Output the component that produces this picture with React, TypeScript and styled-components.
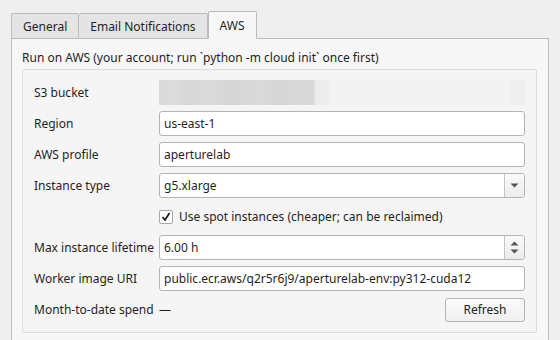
import styled, { createGlobalStyle } from "styled-components";

const Global = createGlobalStyle`
  html, body {
    margin: 0;
    padding: 0;
    background: #efefef;
    font-family: "Noto Sans", "Open Sans", sans-serif;
    font-size: 12px;
    color: #1f1f1f;
  }
`;

const Window = styled.div`
  width: 560px;
  height: 340px;
  box-sizing: border-box;
  padding: 11px 11px 0 11px;
  overflow: hidden;
`;

const TabBar = styled.div`
  display: flex;
  align-items: flex-end;
  height: 27px;
  position: relative;
  z-index: 1;
`;

type TabProps = { active?: boolean };

const Tab = styled.div<TabProps>`
  box-sizing: border-box;
  height: ${(p) => (p.active ? "28px" : "26px")};
  padding: 0 11px;
  display: flex;
  align-items: center;
  border: 1px solid #bcbcbc;
  border-bottom: ${(p) => (p.active ? "1px solid #f7f7f7" : "1px solid #bcbcbc")};
  border-left: ${(p) => (p.active ? "1px solid #bcbcbc" : "none")};
  border-radius: 2px 2px 0 0;
  background: ${(p) => (p.active ? "#f7f7f7" : "#e4e4e4")};
  margin-bottom: -1px;
  &:first-child {
    border-left: 1px solid #bcbcbc;
  }
`;

const Panel = styled.div`
  box-sizing: border-box;
  width: 538px;
  height: 320px;
  border: 1px solid #bcbcbc;
  background: #f7f7f7;
  padding: 9px 10px 0 10px;
`;

const Intro = styled.div`
  height: 21px;
  line-height: 19px;
`;

const Group = styled.div`
  box-sizing: border-box;
  width: 515px;
  height: 264px;
  border: 1px solid #dcdcdc;
  border-radius: 2px;
  background: #f5f5f5;
  padding: 10px 10px 0 10px;
  display: grid;
  grid-template-columns: 126px 366px;
  grid-auto-rows: 25px;
  row-gap: 6px;
  align-items: center;
`;

const Label = styled.div`
  padding-left: 1px;
  white-space: nowrap;
`;

const Blurred = styled.div`
  height: 25px;
  background:
    linear-gradient(90deg,
      #dadada 0px, #dcdcdc 14px, #d7d7d7 28px, #dbdbdb 50px,
      #d6d6d6 70px, #dadada 100px, #d5d5d5 120px, #d9d9d9 140px,
      #d8d8d8 155px, #ececec 156px, #ececec 170px, #f3f3f3 171px,
      #f3f3f3 351px, #eeeeee 352px, #eeeeee 366px);
`;

const Field = styled.div`
  box-sizing: border-box;
  height: 25px;
  border: 1px solid #b4b4b4;
  border-radius: 3px;
  background: #ffffff;
  display: flex;
  align-items: stretch;
  overflow: hidden;
`;

const FieldText = styled.div`
  flex: 1;
  padding-left: 4px;
  display: flex;
  align-items: center;
  white-space: nowrap;
`;

const SideButton = styled.div`
  width: 19px;
  border-left: 1px solid #c4c4c4;
  background: linear-gradient(#fafafa, #ececec);
  display: flex;
  flex-direction: column;
  align-items: center;
  justify-content: center;
  gap: 3px;
`;

const Arrow = styled.svg`
  display: block;
`;

const CheckRow = styled.div`
  grid-column: 2;
  display: flex;
  align-items: center;
  gap: 6px;
`;

const CheckBox = styled.div`
  box-sizing: border-box;
  width: 14px;
  height: 14px;
  border: 1px solid #a8a8a8;
  border-radius: 2px;
  background: #fff;
  display: flex;
  align-items: center;
  justify-content: center;
`;

const SpendRow = styled.div`
  display: flex;
  align-items: center;
  justify-content: space-between;
`;

const Button = styled.button`
  box-sizing: border-box;
  width: 80px;
  height: 24px;
  border: 1px solid #b4b4b4;
  border-radius: 3px;
  background: linear-gradient(#fbfbfb, #efefef);
  font: inherit;
  color: inherit;
  padding: 0;
`;

const Down = () => (
  <Arrow width="9" height="5" viewBox="0 0 9 5">
    <path d="M0.5 0.5 H8.5 L4.5 4.5 Z" fill="#555" />
  </Arrow>
);

const Up = () => (
  <Arrow width="9" height="5" viewBox="0 0 9 5">
    <path d="M0.5 4.5 H8.5 L4.5 0.5 Z" fill="#555" />
  </Arrow>
);

export default function App() {
  return (
    <>
      <Global />
      <Window>
        <TabBar>
          <Tab>General</Tab>
          <Tab>Email Notifications</Tab>
          <Tab active>AWS</Tab>
        </TabBar>
        <Panel>
          <Intro>Run on AWS (your account; run `python -m cloud init` once first)</Intro>
          <Group>
            <Label>S3 bucket</Label>
            <Blurred />

            <Label>Region</Label>
            <Field>
              <FieldText>us-east-1</FieldText>
            </Field>

            <Label>AWS profile</Label>
            <Field>
              <FieldText>aperturelab</FieldText>
            </Field>

            <Label>Instance type</Label>
            <Field>
              <FieldText>g5.xlarge</FieldText>
              <SideButton>
                <Down />
              </SideButton>
            </Field>

            <CheckRow>
              <CheckBox>
                <svg width="10" height="10" viewBox="0 0 10 10">
                  <path d="M1.5 5 L4 8 L8.5 1" fill="none" stroke="#1f1f1f" strokeWidth="1.8" />
                </svg>
              </CheckBox>
              Use spot instances (cheaper; can be reclaimed)
            </CheckRow>

            <Label>Max instance lifetime</Label>
            <Field>
              <FieldText>6.00 h</FieldText>
              <SideButton>
                <Up />
                <Down />
              </SideButton>
            </Field>

            <Label>Worker image URI</Label>
            <Field>
              <FieldText>public.ecr.aws/q2r5r6j9/aperturelab-env:py312-cuda12</FieldText>
            </Field>

            <Label>Month-to-date spend</Label>
            <SpendRow>
              <span>—</span>
              <Button>Refresh</Button>
            </SpendRow>
          </Group>
        </Panel>
      </Window>
    </>
  );
}
